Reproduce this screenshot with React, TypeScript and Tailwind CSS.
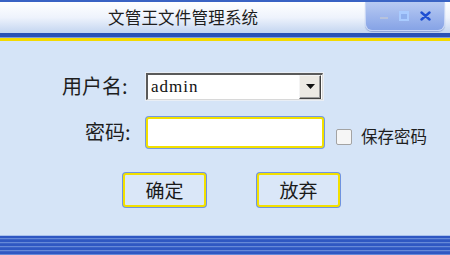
import { useState } from 'react';

const cjk = '"Noto Sans CJK SC", "Noto Sans", sans-serif';

function WindowControls() {
  return (
    <div className="ml-auto mr-[5px] flex h-[29px] w-[80px] items-center justify-around rounded-b-[7px] border border-t-0 border-[#c9d7f5] bg-gradient-to-b from-[#b8caf2] to-[#86a3e6] px-[8px] shadow-[0_1px_1px_rgba(80,110,180,0.5)]">
      <span className="mt-[4px] block h-[2px] w-[8px] bg-[#b7c2dc]" />
      <span className="block h-[10px] w-[10px] border-2 border-t-[3px] border-[#a9cbff] bg-[#8fb0ee]" />
      <svg width="11" height="10" viewBox="0 0 11 10">
        <path d="M1.5 1.5 L9.5 8.5 M9.5 1.5 L1.5 8.5" stroke="#1f4fd2" strokeWidth="2.4" strokeLinecap="round" />
      </svg>
    </div>
  );
}

function FancyButton({ label }: { label: string }) {
  return (
    <button
      className="flex h-[34px] w-[83px] items-center justify-center rounded-[3px] border-2 border-[#f2e000] bg-[#dae7f8] text-[19px] text-[#1a1a1a] shadow-[0_0_0_1px_#6f93e0]"
      style={{ fontFamily: cjk }}
    >
      {label}
    </button>
  );
}

export default function App() {
  const [remember, setRemember] = useState(false);

  return (
    <div className="flex h-[255px] w-[450px] flex-col overflow-hidden bg-[#d5e4f7]" style={{ fontFamily: cjk }}>
      {/* title bar */}
      <div className="h-[2px] bg-[#3a63c4]" />
      <div className="flex h-[31px] items-start bg-gradient-to-b from-[#ffffff] via-[#eef3fc] to-[#c3d5f0]">
        <span className="ml-[108px] mt-[4px] text-[16.5px] leading-[22px] tracking-[0.2px] text-[#1e1e1e]">文管王文件管理系统</span>
        <WindowControls />
      </div>
      <div className="h-[4px] bg-[#2a52b5]" />
      <div className="h-[1px] bg-[#7d9be0]" />
      <div className="h-[3px] bg-[#f3d900]" />

      {/* form */}
      <div className="flex flex-1 flex-col">
        <div className="mt-[30px] flex h-[30px] items-center">
          <label className="ml-[62px] w-[83px] text-[20px] leading-none text-[#1e1e1e]">用户名:</label>
          <div className="flex h-[29px] w-[179px] items-center border border-[#e9eef5] bg-white">
            <div className="flex h-full flex-1 items-center border-l-2 border-t-2 border-l-[#5a5a5a] border-t-[#5a5a5a] border-b border-r border-b-[#d8d8d8] border-r-[#d8d8d8] pl-[3px]">
              <span
                className="flex-1 text-[17px] tracking-[1px] text-[#111]"
                style={{ fontFamily: '"Liberation Serif", "DejaVu Serif", serif' }}
              >
                admin
              </span>
              <div className="mr-[1px] flex h-[24px] w-[22px] items-center justify-center border border-b-[#404040] border-r-[#404040] border-l-[#f4f4f4] border-t-[#f4f4f4] bg-[#ece9e3] shadow-[inset_-1px_-1px_0_#9a9a9a]">
                <svg width="9" height="5" viewBox="0 0 9 5">
                  <path d="M0 0 H9 L4.5 5 Z" fill="#111" />
                </svg>
              </div>
            </div>
          </div>
        </div>

        <div className="mt-[15px] flex h-[32px] items-center">
          <label className="ml-[85px] w-[61px] text-[20px] leading-none text-[#1e1e1e]">密码:</label>
          <div className="h-[31px] w-[178px] rounded-[3px] border-2 border-[#f2e000] bg-white shadow-[0_0_0_1px_#7398e2]" />
          <button
            onClick={() => setRemember(!remember)}
            className="ml-[12px] mt-[10px] flex h-[16px] w-[16px] items-center justify-center rounded-[2px] border border-[#a3a3a3] bg-[#f6f6f6]"
          >
            {remember && <span className="text-[11px] leading-none">✓</span>}
          </button>
          <span className="ml-[9px] mt-[9px] text-[16.5px] leading-none text-[#1e1e1e]">保存密码</span>
        </div>

        <div className="mt-[25px] flex">
          <div className="ml-[123px]">
            <FancyButton label="确定" />
          </div>
          <div className="ml-[51px]">
            <FancyButton label="放弃" />
          </div>
        </div>
      </div>

      {/* bottom stripes */}
      <div className="h-[1px] bg-[#a9c1ec]" />
      <div className="h-[19px] bg-[repeating-linear-gradient(to_bottom,#2f57c2_0px,#2f57c2_2px,#6689d8_2px,#6689d8_3px,#3c63c8_3px,#3c63c8_4px)]" />
    </div>
  );
}
